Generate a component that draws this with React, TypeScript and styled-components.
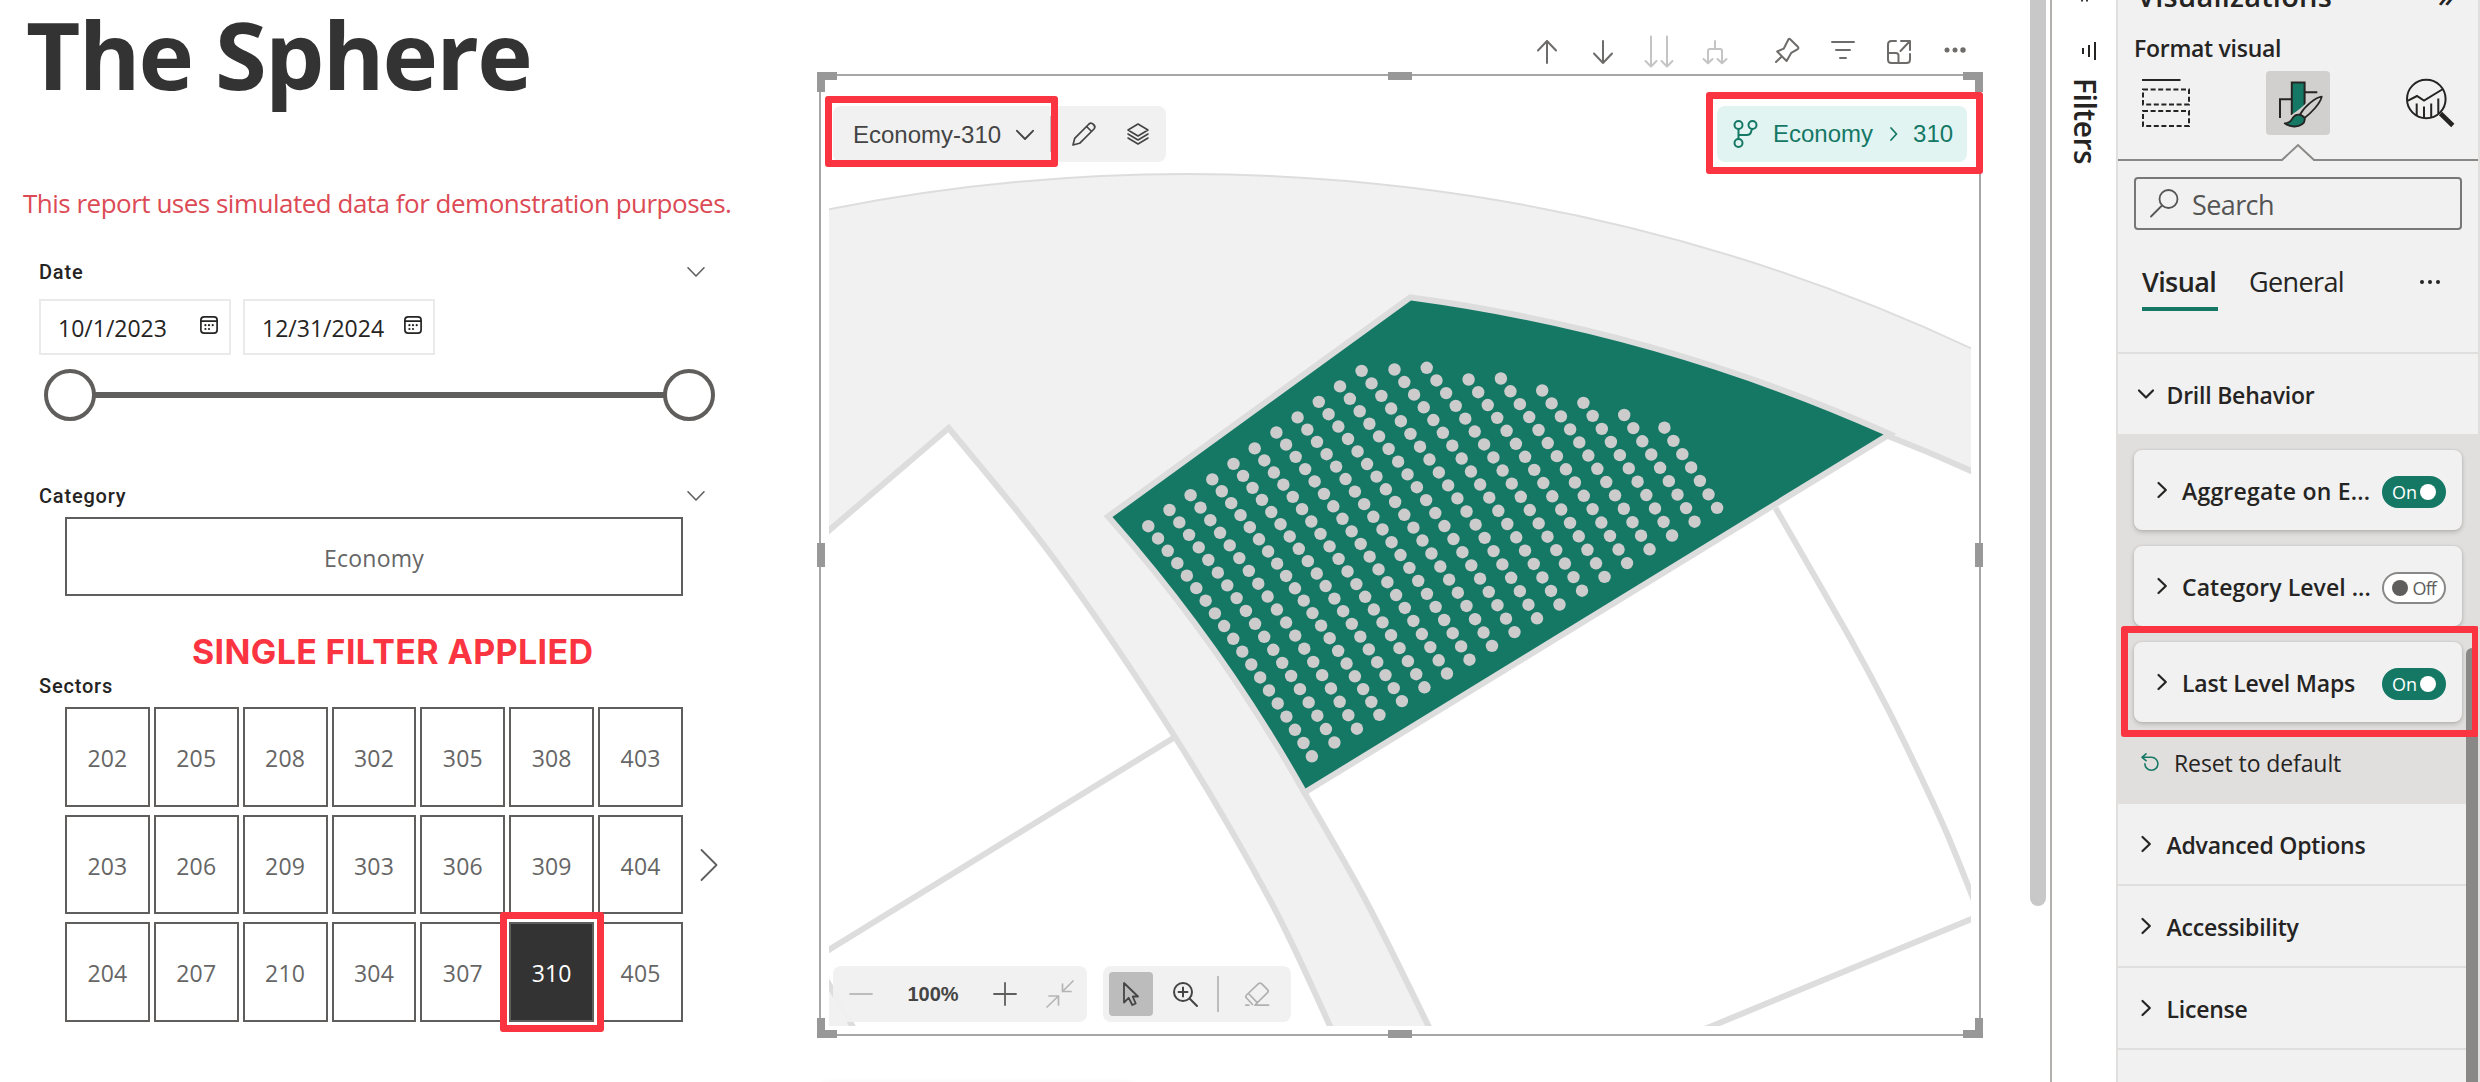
import React from "react";
import styled, { createGlobalStyle, css } from "styled-components";

const c = {
  green: "#147865",
  red: "#fb3441",
  ink: "#252423",
  grey: "#605e5c",
  panel: "#f1f1f1",
  rule: "#e0dfde",
  mapLine: "#dddddd",
  mapFill: "#f1f1f1",
};

const segoe = css`font-family: "Open Sans", "Noto Sans", sans-serif;`;
const arial = css`font-family: "Liberation Sans", Arial, sans-serif;`;

const GlobalStyle = createGlobalStyle`
  *, *::before, *::after { box-sizing: border-box; }
  body { margin: 0; background: #fff; overflow: hidden; }
  button { border: 0; padding: 0; margin: 0; background: none; color: inherit; font: inherit; }
  svg { display: block; flex: none; overflow: visible; }
`;

const Page = styled.div`
  display: flex;
  width: 2480px;
  height: 1082px;
  overflow: hidden;
  background: #fff;
  color: ${c.ink};
  white-space: nowrap;
  ${segoe}
`;

const Highlight = styled.div<{ $x: number; $y: number; $w: number; $h: number }>`
  position: absolute;
  left: ${(p) => p.$x}px;
  top: ${(p) => p.$y}px;
  width: ${(p) => p.$w}px;
  height: ${(p) => p.$h}px;
  border: 7px solid ${c.red};
  border-radius: 3px;
  z-index: 5;
  pointer-events: none;
`;

/* ---------- slicers column ---------- */

const Slicers = styled.section`
  flex: none;
  width: 817px;
  display: flex;
  flex-direction: column;
`;

const Title = styled.h1`
  margin: 1px 0 0 26px;
  height: 107px;
  font-size: 94px;
  line-height: 107px;
  font-weight: 700;
  letter-spacing: -1.8px;
  color: #333;
`;

const Disclaimer = styled.p`
  margin: 77px 0 0 23px;
  font-size: 26px;
  line-height: 36px;
  letter-spacing: -0.5px;
  color: #dc4a55;
`;

const SlicerHeader = styled.header<{ $top: number }>`
  display: flex;
  justify-content: space-between;
  align-items: center;
  width: 666px;
  height: 24px;
  margin: ${(p) => p.$top}px 0 0 39px;
  font: 500 20px/24px Roboto, sans-serif;
  letter-spacing: 0.8px;
  svg { color: ${c.grey}; }
`;

const DateInputs = styled.div`
  display: flex;
  gap: 12px;
  margin: 15px 0 0 39px;
`;

const DateField = styled.div`
  display: flex;
  justify-content: space-between;
  width: 192px;
  height: 56px;
  padding: 1px 11px 0 17px;
  border: 2px solid #eaeaea;
  font-size: 23px;
  line-height: 52px;
  svg { margin-top: 14px; }
`;

const Slider = styled.div`
  display: flex;
  align-items: center;
  width: 671px;
  height: 52px;
  margin: 14px 0 0 44px;
`;
const Thumb = styled.div`
  flex: none;
  width: 52px;
  height: 52px;
  border: 4px solid ${c.grey};
  border-radius: 50%;
`;
const Track = styled.div`
  flex: 1;
  height: 6px;
  margin: 0 -1px;
  background: ${c.grey};
`;

const Tile = styled.button<{ $selected?: boolean }>`
  position: relative;
  display: flex;
  align-items: center;
  justify-content: center;
  padding-top: 2px;
  border: 2px solid ${c.grey};
  font-size: 23px;
  letter-spacing: 0.2px;
  color: ${(p) => (p.$selected ? "#fff" : "#666")};
  background: ${(p) => (p.$selected ? "#333" : "#fff")};
`;

const CategoryList = styled.div`
  display: grid;
  width: 618px;
  height: 79px;
  margin: 9px 0 0 65px;
`;

const Callout = styled.div`
  margin: 36px 0 2px 192px;
  font: 700 34px/40px Inter, sans-serif;
  letter-spacing: 0.35px;
  color: ${c.red};
`;

const SectorRow = styled.div`
  display: flex;
  align-items: center;
  gap: 17px;
  margin: 9px 0 0 65px;
  & > svg { color: ${c.grey}; }
`;
const SectorGrid = styled.div`
  display: grid;
  width: 618px;
  grid-template-columns: repeat(7, 1fr);
  grid-template-rows: 100px 99px 100px;
  gap: 8px 4px;
`;

/* ---------- map visual ---------- */

const VisualColumn = styled.section`
  flex: none;
  width: 1213px;
  display: flex;
  flex-direction: column;
`;

const VisualActions = styled.div`
  flex: none;
  display: flex;
  justify-content: flex-end;
  width: 1166px;
  height: 74px;
  padding-top: 32px;
`;
const ActionGroup = styled.div<{ $muted?: boolean }>`
  display: flex;
  color: ${(p) => (p.$muted ? "#c4c4c4" : "#6e6c6a")};
`;
const ActionButton = styled.button`
  display: flex;
  justify-content: center;
  width: 56px;
  height: 40px;
`;
const ActionGap = styled.div`
  width: 16px;
`;

const Frame = styled.div`
  flex: none;
  position: relative;
  width: 1162px;
  height: 962px;
  margin-left: 2px;
  padding: 8px;
  border: 2px solid #a6a6a6;
`;

const Handle = styled.i<{ $left: string; $top: string; $w: number; $h: number }>`
  position: absolute;
  left: ${(p) => p.$left};
  top: ${(p) => p.$top};
  width: ${(p) => p.$w}px;
  height: ${(p) => p.$h}px;
  background: #989898;
`;

const MapArea = styled.div`
  position: relative;
  width: 1142px;
  height: 942px;
`;
const MapSvg = styled.svg`
  && {
    width: 1142px;
    height: 942px;
    overflow: hidden;
  }
`;
const MapOverlay = styled.div`
  position: absolute;
  inset: 0;
  display: flex;
  flex-direction: column;
  justify-content: space-between;
  padding: 22px 4px 4px;
`;
const OverlayRow = styled.div<{ $spread?: boolean }>`
  display: flex;
  gap: 16px;
  justify-content: ${(p) => (p.$spread ? "space-between" : "flex-start")};
`;
const Bar = styled.div<{ $w: number; $pad?: string }>`
  position: relative;
  display: flex;
  align-items: center;
  width: ${(p) => p.$w}px;
  height: 56px;
  padding: ${(p) => p.$pad || "0"};
  border-radius: 8px;
  background: rgba(240, 240, 240, 0.96);
  color: #444;
  ${arial}
`;
const MapPicker = styled.button`
  display: flex;
  align-items: center;
  width: 197px;
  gap: 15px;
  font-size: 24px;
  line-height: 54px;
  padding-top: 2px;
`;
const Divider = styled.div<{ $w: number; $gap: string }>`
  width: ${(p) => p.$w}px;
  height: 36px;
  margin: ${(p) => p.$gap};
  background: #bdbdbd;
`;
const BarButton = styled.button<{ $w: number; $tone?: string; $active?: boolean }>`
  display: flex;
  align-items: center;
  justify-content: center;
  width: ${(p) => p.$w}px;
  height: 44px;
  border-radius: 4px;
  color: ${(p) => p.$tone || "#444"};
  background: ${(p) => (p.$active ? "#bcbcbc" : "transparent")};
`;
const ZoomValue = styled.span`
  width: 88px;
  text-align: center;
  font-size: 20px;
  font-weight: 700;
`;
const Breadcrumb = styled.nav`
  position: relative;
  display: flex;
  align-items: center;
  width: 250px;
  height: 56px;
  padding: 0 0 0 16px;
  border-radius: 8px;
  background: #e2f4f2;
  color: ${c.green};
  font-size: 24px;
  line-height: 54px;
  ${arial}
`;
const Crumb = styled.span<{ $ml: number }>`
  margin-left: ${(p) => p.$ml}px;
`;
const NextVisual = styled.div`
  flex: none;
  width: 310px;
  height: 40px;
  margin: 49px 0 0 6px;
  box-shadow: 0 0 8px rgba(0, 0, 0, 0.09);
`;

const PageScroll = styled.div`
  flex: none;
  width: 16px;
  height: 906px;
  border-radius: 0 0 8px 8px;
  background: #c8c8c8;
`;

/* ---------- filters strip ---------- */

const FiltersStrip = styled.aside`
  flex: none;
  width: 66px;
  margin-left: 4px;
  border-left: 2px solid #b3b0ae;
  display: flex;
  flex-direction: column;
  align-items: center;
  & > svg { margin-left: 7px; }
`;
const FiltersLabel = styled.div`
  margin: 15px 0 0 2px;
  writing-mode: vertical-rl;
  font-size: 30px;
  line-height: 40px;
  font-weight: 600;
  letter-spacing: -0.45px;
`;

/* ---------- format pane ---------- */

const Pane = styled.aside`
  position: relative;
  flex: none;
  width: 364px;
  height: 1082px;
  border: solid ${c.rule};
  border-width: 0 2px;
  background: ${c.panel};
  overflow: hidden;
`;
const PaneTop = styled.div`
  display: flex;
  flex-direction: column;
  height: 352px;
  padding: 0 16px;
`;
const PaneTitle = styled.div`
  display: flex;
  justify-content: space-between;
  height: 36px;
  margin: -22px 8px 0 3px;
  font-size: 29px;
  line-height: 36px;
  font-weight: 600;
  letter-spacing: 0.2px;
`;
const PaneSubtitle = styled.div`
  margin: 19px 0 0 0;
  font-size: 23px;
  line-height: 30px;
  font-weight: 600;
  letter-spacing: -0.28px;
`;
const ModeRow = styled.div`
  display: flex;
  justify-content: space-between;
  margin-top: 8px;
`;
const Mode = styled.button<{ $active?: boolean }>`
  display: flex;
  align-items: center;
  justify-content: center;
  width: 64px;
  height: 64px;
  border-radius: 4px;
  background: ${(p) => (p.$active ? "#d2d0ce" : "transparent")};
`;
const NotchRule = styled.div`
  margin: 9px -16px 0;
`;
const SearchBox = styled.div`
  display: flex;
  align-items: center;
  gap: 14px;
  height: 53px;
  margin-top: 16px;
  padding: 0 0 0 14px;
  border: 2px solid #777;
  border-radius: 4px;
  font-size: 27px;
  letter-spacing: -0.6px;
  color: #555;
  line-height: 46px;
  svg { margin-top: -1px; }
  span { padding-top: 3px; }
`;
const Tabs = styled.div`
  display: flex;
  align-items: flex-start;
  margin: 33px 22px 0 8px;
`;
const Tab = styled.button<{ $active?: boolean; $ml?: number }>`
  width: ${(p) => (p.$active ? "76px" : "auto")};
  height: 48px;
  margin-left: ${(p) => p.$ml || 0}px;
  border-bottom: 4px solid ${(p) => (p.$active ? c.green : "transparent")};
  text-align: left;
  font-size: 27px;
  line-height: 38px;
  padding-bottom: 6px;
  font-weight: ${(p) => (p.$active ? 600 : 400)};
  letter-spacing: -0.62px;
`;
const TabMore = styled.button`
  margin: 17px 0 0 auto;
`;
const GroupHeader = styled.div<{ $line?: "top" | "bottom" }>`
  display: flex;
  align-items: center;
  height: 82px;
  padding: 2px 0 0 20px;
  ${(p) => (p.$line === "top" ? `border-top: 2px solid ${c.rule};` : `border-bottom: 2px solid ${c.rule};`)}
  font-size: 23px;
  font-weight: 600;
  letter-spacing: -0.22px;
  svg { margin-top: -3px; margin-right: 12.5px; }
`;
const CardStack = styled.div`
  display: flex;
  flex-direction: column;
  gap: 16px;
  height: 370px;
  padding: 16px 16px 0;
  background: #e1dfdd;
`;
const Card = styled.div`
  position: relative;
  display: flex;
  align-items: center;
  height: 80px;
  padding: 0 16px 0 20px;
  border-radius: 8px;
  background: ${c.panel};
  box-shadow: 0 2px 5px rgba(0, 0, 0, 0.2), 0 0 2px rgba(0, 0, 0, 0.1);
`;
const CardLabel = styled.span<{ $ls: number }>`
  flex: 1;
  padding: 1px 0 0 12px;
  font-size: 23px;
  font-weight: 600;
  letter-spacing: ${(p) => p.$ls}px;
`;
const Toggle = styled.button<{ $on: boolean }>`
  display: flex;
  flex-direction: ${(p) => (p.$on ? "row" : "row-reverse")};
  align-items: center;
  justify-content: space-between;
  width: 64px;
  height: 32px;
  margin-top: 3px;
  padding: 0 8px;
  border: 2px solid ${(p) => (p.$on ? c.green : "#8a8886")};
  border-radius: 16px;
  background: ${(p) => (p.$on ? c.green : "#fff")};
  color: ${(p) => (p.$on ? "#fff" : c.grey)};
  font-size: 18px;
  line-height: 28px;
  letter-spacing: ${(p) => (p.$on ? 0 : "-0.9px")};
  &::after {
    content: "";
    width: 16px;
    height: 16px;
    border-radius: 50%;
    background: ${(p) => (p.$on ? "#fff" : c.grey)};
  }
`;
const ResetRow = styled.button`
  display: flex;
  align-items: center;
  gap: 15px;
  height: 82px;
  margin-top: -16px;
  padding-left: 7px;
  font-size: 23px;
  letter-spacing: -0.1px;
  svg { margin-top: -3px; color: ${c.green}; }
`;
const PaneScroll = styled.div`
  position: absolute;
  right: 0;
  top: 648px;
  width: 12px;
  height: 440px;
  border-radius: 6px;
  background: #8a8886;
`;

/* ---------- icons ---------- */

type IconProps = { w: number; h: number; sw?: number; children: React.ReactNode };
const Icon = ({ w, h, sw = 2, children }: IconProps) => (
  <svg width={w} height={h} viewBox={`0 0 ${w} ${h}`} fill="none" stroke="currentColor" strokeWidth={sw} strokeLinecap="round" strokeLinejoin="round">
    {children}
  </svg>
);

const ChevronDownThin = () => (
  <Icon w={18} h={10} sw={1.6}><path d="M1 .8 9 9 17 .8" /></Icon>
);
const ChevronRightBold = () => (
  <Icon w={16} h={16} sw={2.2}><path d="M4.5 1 11.8 8 4.5 15" /></Icon>
);
const ChevronDownBold = () => (
  <Icon w={16} h={16} sw={2.2}><path d="M1 4.5 8 11.5 15 4.5" /></Icon>
);
const CalendarIcon = () => (
  <Icon w={18} h={18} sw={1.7}>
    <rect x="0.9" y="0.9" width="16.2" height="16.2" rx="3.2" />
    <path d="M1 5.2h16" />
    <g fill="currentColor" stroke="none">
      <circle cx="5.4" cy="9.2" r="1.1" /><circle cx="9" cy="9.2" r="1.1" /><circle cx="12.7" cy="9.2" r="1.1" />
      <circle cx="5.4" cy="13" r="1.1" /><circle cx="9" cy="13" r="1.1" />
    </g>
  </Icon>
);

const visualActions = {
  drillUp: <Icon w={28} h={40}><path d="M14 31V9M5 18.5 14 9l9 9.5" /></Icon>,
  drillDown: <Icon w={28} h={40}><path d="M14 9v22M5 21.5l9 9.5 9-9.5" /></Icon>,
  nextLevel: <Icon w={28} h={40}><path d="M6 4.500v30M.5 29 6 34.500l5.500-5.500M22 4.500v30M16.500 29l5.500 5.500 5.500-5.500" /></Icon>,
  expand: <Icon w={28} h={40}><path d="M14 9v8M7 31V19q0-2 2-2h10q2 0 2 2v12M2.500 27 7 31.300l4.500-4.300M16.500 27l4.500 4.300 4.500-4.300" /></Icon>,
  pin: <Icon w={28} h={40}><path d="M15.500 7.300q.8-.8 1.700 0l7.600 7.400q1.200 1.400 0 2.400l-6.600 3.800-4.600 8.100L4.200 19.500l6.500-2.800zM8.900 24.300 3 30" /></Icon>,
  filter: <Icon w={28} h={40}><path d="M3 10h22M7 18h14M11 26h6" /></Icon>,
  focus: <Icon w={28} h={40}><path d="M11 9H6.500Q3 9 3 12.500v15Q3 31 6.500 31h15q3.500 0 3.500-3.500V22M3 21h8q2.500 0 2.500 2.500V31M16 9h9v9M25 9 15.500 19" /></Icon>,
  more: <Icon w={28} h={40}><g fill="currentColor" stroke="none"><circle cx="6" cy="18" r="2.500" /><circle cx="14" cy="18" r="2.500" /><circle cx="22" cy="18" r="2.700" /></g></Icon>,
};

const PencilIcon = () => (
  <Icon w={24} h={24} sw={1.7}><path d="M1 23l1.700-6.600L17 2q2-1.800 4.500.5T22 7L7.600 21.300zM14.600 4.500l5 5" /></Icon>
);
const LayersIcon = () => (
  <Icon w={22} h={22} sw={1.6}>
    <path d="M11 1 21 7l-10 6L1 7zM1 11l10 6 10-6M1 15l10 6 10-6" />
  </Icon>
);
const BranchIcon = () => (
  <Icon w={25} h={28}><circle cx="5.500" cy="5" r="4" /><circle cx="19.500" cy="5" r="4" /><circle cx="5.500" cy="23" r="4" /><path d="M5.500 9v10M5.500 15H14q3 0 3.800-2.300L19 9" /></Icon>
);
const MinusIcon = () => <Icon w={24} h={24} sw={1.8}><path d="M1 12h22" /></Icon>;
const PlusIcon = () => <Icon w={24} h={24} sw={1.8}><path d="M1 12h22M12 1v22" /></Icon>;
const CollapseIcon = () => (
  <Icon w={28} h={28} sw={1.7}><path d="M27 1 16.500 11.500M16.500 4v7.500H25M1 27l11.500-11M3 16h9.500v9" /></Icon>
);
const CursorIcon = () => (
  <Icon w={16} h={24} sw={1.8}><path d="M1 1v19.500l4.700-4.700L9.300 23l3.400-1.500L9.700 14.500H15z" /></Icon>
);
const ZoomIcon = () => (
  <Icon w={25} h={25}><circle cx="10" cy="10" r="9" /><path d="M16.800 16.800 24 24M10 5.500v9M5.500 10h9" /></Icon>
);
const EraserIcon = () => (
  <Icon w={24} h={24} sw={1.7}><path d="M7.500 22.500 1.500 16q-1.300-1.600 0-3L13.500 1.700q1.500-1.200 3 0l6 6q1.400 1.500 0 3L10.500 22.500M3.500 11.500l9 9.300M10 23.200h13.500M.8 23.200h3" /></Icon>
);
const UndoIcon = () => (
  <Icon w={18} h={18} sw={1.6}><path d="M5 .8 1 4.300l4 3.400M1 4.300h9.500a6.500 6.500 0 1 1-6.600 6.600" /></Icon>
);
const SearchIcon = () => (
  <Icon w={28} h={28} sw={1.8}><circle cx="18.500" cy="10" r="9" /><path d="M12 16.500 1 27.500" /></Icon>
);
const FieldsIcon = () => (
  <svg width="48" height="48" viewBox="0 0 48 48" fill="none" stroke={c.ink} strokeWidth="2">
    <path d="M0 1h38.500" />
    <rect x="1" y="10.500" width="46" height="15" strokeDasharray="5 2.600" />
    <rect x="1" y="32" width="46" height="15" strokeDasharray="5 2.600" />
  </svg>
);
const FormatIcon = () => (
  <svg width="64" height="64" viewBox="0 0 64 64" fill="none" stroke={c.ink} strokeWidth="2">
    <path d="M14 47V28.300h11.500M39 21.300h12.300" />
    <path d="M25.800 44V11.500h12.800V34" fill={c.green} />
    <path d="M55.700 25.700C49 26.500 38 36 34 43.500l4.500 3.500C45 42 54.500 32.500 55.700 25.700zM18.700 52.300C24 52 25 49.500 27 46.500 30 42 36 43 38.500 47 40 52 34 55.800 28 55.500 24 55.300 21 54 18.700 52.300z" fill="#d2d0ce" stroke="#d2d0ce" strokeWidth="5" />
    <path d="M55.700 25.700C49 26.500 38 36 34 43.500l4.500 3.500C45 42 54.500 32.500 55.700 25.700z" fill="#d2d0ce" strokeWidth="1.800" strokeLinejoin="round" />
    <path d="M18.700 52.300C24 52 25 49.500 27 46.500 30 42 36 43 38.500 47 40 52 34 55.800 28 55.500 24 55.300 21 54 18.700 52.300z" fill={c.green} strokeWidth="1.800" strokeLinejoin="round" />
  </svg>
);
const AnalyticsIcon = () => (
  <svg width="48" height="48" viewBox="0 0 48 48" fill="none" stroke={c.ink} strokeWidth="2">
    <circle cx="20.300" cy="20" r="19.300" />
    <path d="M2 21.700 11 17l7 4.500L37 10M10.700 24.500V37M18 27.500V39M25.200 24.500V38M32.300 19.500V34.500" />
    <path d="M34.500 34.500 46.800 46.500" strokeWidth="4.600" />
  </svg>
);
const FunnelStrip = () => (
  <svg width="18" height="63" viewBox="0 0 18 63" fill="none" stroke={c.ink} strokeWidth="2">
    <path d="M3 0v1.500M8 0v1.500" strokeWidth="1.800" />
    <path d="M4 48v6M10 45v12M16 42v18" />
  </svg>
);
const Notch = () => (
  <svg width="360" height="17" viewBox="0 0 360 17" fill="none" stroke="#8a8886" strokeWidth="2">
    <path d="M0 16h164l16-15 16 15h164" />
  </svg>
);

/* ---------- seating map ---------- */

type Point = [number, number];

// Catmull-Rom spline through the given points, as cubic segments.
const spline = (pts: Point[]) =>
  pts.slice(0, -1).map((p, i) => {
    const a = pts[i - 1] || p;
    const n = pts[i + 1];
    const d = pts[i + 2] || n;
    return `C${p[0] + (n[0] - a[0]) / 6} ${p[1] + (n[1] - a[1]) / 6} ${n[0] - (d[0] - p[0]) / 6} ${n[1] - (d[1] - p[1]) / 6} ${n[0]} ${n[1]}`;
  }).join("");

const innerAisle: Point[] = [[948.7, 428], [1055, 560], [1175, 737], [1270, 900], [1330, 1026], [1340, 1049]];
const outerAisle: Point[] = [[1303, 790], [1365.5, 900], [1428.5, 1026], [1439, 1049]];
const eastBlock: Point[] = [[1775.5, 508], [1850, 638], [1886.7, 706.7], [1920, 775], [1946.7, 833], [1971, 893], [1980, 916]];
const section = "M1411 300.500A1736 1736 0 0 1 1883.500 434.500L1305.500 788.500Q1223 642 1112.500 517Z";

// Each seat line: first seat, and how many seats it holds.
const seatLines: [number, number, number][] = [
  [1148.3, 526.2, 19], [1169.5, 510, 19], [1190.6, 495.2, 19], [1212.3, 479.4, 20], [1233.5, 463.9, 20],
  [1254.7, 448.4, 20], [1276.4, 432.5, 20], [1297.6, 417.4, 20], [1318.8, 401.9, 20], [1340, 386.4, 20],
  [1361.6, 370.9, 20], [1394.5, 369.5, 19], [1426.7, 367.8, 18], [1468.6, 379.5, 16], [1500.9, 378.5, 15],
  [1542.2, 390.5, 13], [1583.4, 402.9, 11], [1624.2, 415, 9], [1664.4, 427.7, 7],
];
const seats: Point[] = seatLines.flatMap(([x, y, n], i) => {
  const ex = 1311.9 + i * 22.51;
  const ey = 756.3 - i * 13.8;
  const k = (n / 20) ** 2;
  return Array.from({ length: n }, (_, j): Point => {
    const t = j / (n - 1);
    const b = 4 * t * (1 - t) * k;
    return [x + (ex - x) * t + 3.5 * b, y + (ey - y) * t - 2.7 * b];
  });
});

const SeatingMap = () => (
  <MapSvg viewBox="829 84 1142 942">
    <path
      d={`M829 208.900A1850 1850 0 0 1 1971 348.300V471A1739 1739 0 0 0 1884 434L1303 790${spline(outerAisle)}H1340${spline([...innerAisle].reverse())}L829 530.500Z`}
      fill={c.mapFill}
    />
    <path d="M829 988 853 1026H829Z" fill={c.mapFill} />
    <g fill="none" stroke={c.mapLine} strokeWidth="6">
      <path d="M820 211A1850 1850 0 0 1 1980 352.500" strokeWidth="2" />
      <path d="M1883 434A1739 1739 0 0 1 1980 475" />
      <path d={`M819 539 948.700 428${spline(innerAisle)}`} />
      <path d={`M1303 790${spline(outerAisle)}`} />
      <path d="M1175 737 819 956M822 972 858 1036" />
      <path d={`M1775.500 508${spline(eastBlock)}`} />
      <path d="M1700 1031 1775 1000 1980 915.500" />
    </g>
    <path d={section} fill={c.mapLine} stroke={c.mapLine} strokeWidth="12" />
    <path d={section} fill={c.green} />
    <g fill="#cccccc">
      {seats.map(([x, y], i) => <circle key={i} cx={x} cy={y} r="6.200" />)}
    </g>
  </MapSvg>
);

/* ---------- data ---------- */

const sectors = [
  "202", "205", "208", "302", "305", "308", "403",
  "203", "206", "209", "303", "306", "309", "404",
  "204", "207", "210", "304", "307", "310", "405",
];
const cards = [
  { label: "Aggregate on E...", on: true, ls: 0.22 },
  { label: "Category Level ...", on: false, ls: 0.05 },
  { label: "Last Level Maps", on: true, ls: -0.18, marked: true },
];

export default function App() {
  return (
    <Page>
      <GlobalStyle />

      <Slicers>
        <Title>The Sphere</Title>
        <Disclaimer>This report uses simulated data for demonstration purposes.</Disclaimer>
        <SlicerHeader $top={39}>Date<ChevronDownThin /></SlicerHeader>
        <DateInputs>
          <DateField>10/1/2023<CalendarIcon /></DateField>
          <DateField>12/31/2024<CalendarIcon /></DateField>
        </DateInputs>
        <Slider><Thumb /><Track /><Thumb /></Slider>
        <SlicerHeader $top={63}>Category<ChevronDownThin /></SlicerHeader>
        <CategoryList><Tile>Economy</Tile></CategoryList>
        <Callout>SINGLE FILTER APPLIED</Callout>
        <SlicerHeader $top={0}>Sectors</SlicerHeader>
        <SectorRow>
          <SectorGrid>
            {sectors.map((s) => (
              <Tile key={s} $selected={s === "310"}>
                {s}
                {s === "310" && <Highlight $x={-11} $y={-12} $w={104} $h={120} />}
              </Tile>
            ))}
          </SectorGrid>
          <Icon w={18} h={32} sw={1.8}><path d="M1.500 1 16.500 16 1.500 31" /></Icon>
        </SectorRow>
      </Slicers>

      <VisualColumn>
        <VisualActions>
          <ActionGroup>
            <ActionButton>{visualActions.drillUp}</ActionButton>
            <ActionButton>{visualActions.drillDown}</ActionButton>
          </ActionGroup>
          <ActionGroup $muted>
            <ActionButton>{visualActions.nextLevel}</ActionButton>
            <ActionButton>{visualActions.expand}</ActionButton>
          </ActionGroup>
          <ActionGap />
          <ActionGroup>
            <ActionButton>{visualActions.pin}</ActionButton>
            <ActionButton>{visualActions.filter}</ActionButton>
            <ActionButton>{visualActions.focus}</ActionButton>
            <ActionButton>{visualActions.more}</ActionButton>
          </ActionGroup>
        </VisualActions>

        <Frame>
          <MapArea>
            <SeatingMap />
            <MapOverlay>
              <OverlayRow $spread>
                <Bar $w={333} $pad="0 0 0 20px">
                  <MapPicker>
                    Economy-310
                    <Icon w={18} h={10} sw={1.9}><path d="M1 .8 9 9 17 .8" /></Icon>
                  </MapPicker>
                  <Divider $w={1} $gap="0 6px 0 0" />
                  <BarButton $w={54}><PencilIcon /></BarButton>
                  <BarButton $w={54}><LayersIcon /></BarButton>
                  <Highlight $x={-8} $y={-10} $w={233} $h={71} />
                </Bar>
                <Breadcrumb>
                  <BranchIcon />
                  <Crumb $ml={15}>Economy</Crumb>
                  <Crumb $ml={17}><Icon w={8} h={14} sw={1.8}><path d="M1 1l5.500 6L1 13" /></Icon></Crumb>
                  <Crumb $ml={15}>310</Crumb>
                  <Highlight $x={-11} $y={-14} $w={277} $h={82} />
                </Breadcrumb>
              </OverlayRow>
              <OverlayRow>
                <Bar $w={254}>
                  <BarButton $w={56} $tone="#bdbdbd"><MinusIcon /></BarButton>
                  <ZoomValue>100%</ZoomValue>
                  <BarButton $w={56} $tone="#605e5c"><PlusIcon /></BarButton>
                  <BarButton $w={54} $tone="#b5b5b5"><CollapseIcon /></BarButton>
                </Bar>
                <Bar $w={188} $pad="0 6px">
                  <BarButton $w={44} $active><CursorIcon /></BarButton>
                  <BarButton $w={64}><ZoomIcon /></BarButton>
                  <Divider $w={2} $gap="0 16px 0 0" />
                  <BarButton $w={44} $tone="#b0b0b0"><EraserIcon /></BarButton>
                </Bar>
              </OverlayRow>
            </MapOverlay>
          </MapArea>

          <Handle $left="-4px" $top="-4px" $w={20} $h={8} />
          <Handle $left="-4px" $top="-4px" $w={8} $h={20} />
          <Handle $left="567px" $top="-4px" $w={24} $h={8} />
          <Handle $left="1142px" $top="-4px" $w={20} $h={8} />
          <Handle $left="1154px" $top="-4px" $w={8} $h={20} />
          <Handle $left="-4px" $top="467px" $w={8} $h={24} />
          <Handle $left="1154px" $top="467px" $w={8} $h={24} />
          <Handle $left="-4px" $top="954px" $w={20} $h={8} />
          <Handle $left="-4px" $top="942px" $w={8} $h={20} />
          <Handle $left="567px" $top="954px" $w={24} $h={8} />
          <Handle $left="1142px" $top="954px" $w={20} $h={8} />
          <Handle $left="1154px" $top="942px" $w={8} $h={20} />
        </Frame>
        <NextVisual />
      </VisualColumn>

      <PageScroll />

      <FiltersStrip>
        <FunnelStrip />
        <FiltersLabel>Filters</FiltersLabel>
      </FiltersStrip>

      <Pane>
        <PaneTop>
          <PaneTitle><span>Visualizations</span><span>»</span></PaneTitle>
          <PaneSubtitle>Format visual</PaneSubtitle>
          <ModeRow>
            <Mode><FieldsIcon /></Mode>
            <Mode $active><FormatIcon /></Mode>
            <Mode><AnalyticsIcon /></Mode>
          </ModeRow>
          <NotchRule><Notch /></NotchRule>
          <SearchBox><SearchIcon /><span>Search</span></SearchBox>
          <Tabs>
            <Tab $active>Visual</Tab>
            <Tab $ml={31}>General</Tab>
            <TabMore>
              <svg width="20" height="4" viewBox="0 0 20 4" fill={c.ink}>
                <circle cx="2" cy="2" r="2" /><circle cx="10" cy="2" r="2" /><circle cx="18" cy="2" r="2" />
              </svg>
            </TabMore>
          </Tabs>
        </PaneTop>
        <GroupHeader $line="top"><ChevronDownBold />Drill Behavior</GroupHeader>
        <CardStack>
          {cards.map((card) => (
            <Card key={card.label}>
              <ChevronRightBold />
              <CardLabel $ls={card.ls}>{card.label}</CardLabel>
              <Toggle $on={card.on}>{card.on ? "On" : "Off"}</Toggle>
              {card.marked && <Highlight $x={-13} $y={-16} $w={358} $h={111} />}
            </Card>
          ))}
          <ResetRow>
            <UndoIcon />
            Reset to default
          </ResetRow>
        </CardStack>
        <GroupHeader><ChevronRightBold />Advanced Options</GroupHeader>
        <GroupHeader><ChevronRightBold />Accessibility</GroupHeader>
        <GroupHeader><ChevronRightBold />License</GroupHeader>
        <PaneScroll />
      </Pane>
    </Page>
  );
}
